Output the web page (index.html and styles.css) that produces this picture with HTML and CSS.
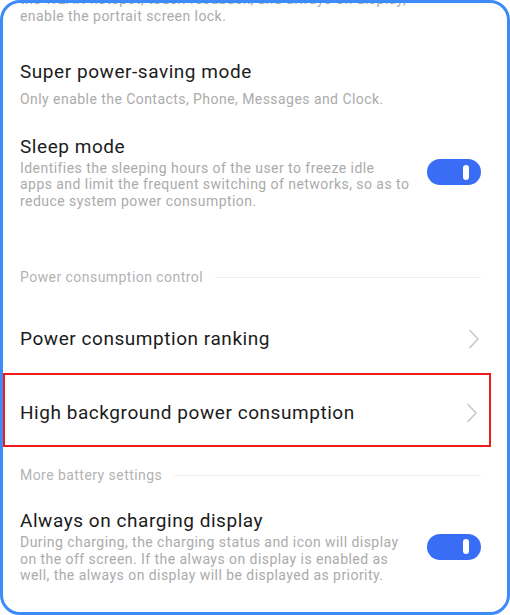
FILE: index.html
```html
<!DOCTYPE html>
<html>
<head>
<meta charset="utf-8">
<link rel="stylesheet" href="styles.css">
</head>
<body>
<div class="frame">
  <div class="list">
    <div class="item item-top">
      <div class="desc">the WLAN hotspot, touch feedback, and always-on display,<br>enable the portrait screen lock.</div>
    </div>

    <div class="item item-super">
      <div class="title">Super power-saving mode</div>
      <div class="desc desc-gap">Only enable the Contacts, Phone, Messages and Clock.</div>
    </div>

    <div class="item item-row item-sleep">
      <div class="text">
        <div class="title">Sleep mode</div>
        <div class="desc desc-tight">Identifies the sleeping hours of the user to freeze idle<br>apps and limit the frequent switching of networks, so as to<br>reduce system power consumption.</div>
      </div>
      <div class="toggle"><span class="knob"></span></div>
    </div>

    <div class="section section-1">
      <span class="section-label">Power consumption control</span>
      <span class="section-line"></span>
    </div>

    <div class="item item-row item-link item-rank">
      <div class="title">Power consumption ranking</div>
      <svg class="chev" width="10" height="20" viewBox="0 0 10 20"><path d="M1 1.5 L9 10 L1 18.5" fill="none" stroke="#c6c6c6" stroke-width="1.5" stroke-linecap="round" stroke-linejoin="round"/></svg>
    </div>

    <div class="item item-row item-link item-high">
      <div class="title">High background power consumption</div>
      <svg class="chev" width="10" height="20" viewBox="0 0 10 20"><path d="M1 1.5 L9 10 L1 18.5" fill="none" stroke="#c6c6c6" stroke-width="1.5" stroke-linecap="round" stroke-linejoin="round"/></svg>
    </div>

    <div class="section section-2">
      <span class="section-label">More battery settings</span>
      <span class="section-line"></span>
    </div>

    <div class="item item-row item-aod">
      <div class="text">
        <div class="title">Always on charging display</div>
        <div class="desc desc-tight">During charging, the charging status and icon will display<br>on the off screen. If the always on display is enabled as<br>well, the always on display will be displayed as priority.</div>
      </div>
      <div class="toggle"><span class="knob"></span></div>
    </div>

    <div class="item item-next">
      <div class="title">Power saving</div>
    </div>
  </div>
</div>
</body>
</html>
```

FILE: styles.css
```css
html, body {
  margin: 0;
  padding: 0;
  background: #ffffff;
}

.frame {
  width: 510px;
  height: 615px;
  box-sizing: border-box;
  border: 3px solid #3d8bf6;
  border-radius: 20px;
  overflow: hidden;
  background: #ffffff;
  font-family: Roboto, "Noto Sans", Arial, sans-serif;
}

.list {
  display: flex;
  flex-direction: column;
  padding: 0 26px 0 17px;
}

.title {
  font-size: 19px;
  line-height: 24px;
  color: #1b1b1b;
  letter-spacing: 0.55px;
  white-space: nowrap;
}

.desc {
  font-size: 14px;
  line-height: 16.5px;
  color: #ababab;
  letter-spacing: 0.45px;
  white-space: nowrap;
}

.item-top {
  margin-top: -11.75px;
}

.item-super {
  margin-top: 36px;
}

.desc-gap {
  margin-top: 7px;
}

.desc-tight {
  margin-top: 1px;
}

.item-row {
  display: flex;
  align-items: center;
  justify-content: space-between;
}

.item-sleep {
  margin-top: 27px;
}

.toggle {
  width: 54px;
  height: 26px;
  border-radius: 13px;
  background: #3a6df5;
  display: flex;
  align-items: center;
  justify-content: flex-end;
  padding-right: 12px;
  box-sizing: border-box;
  flex-shrink: 0;
}

.knob {
  width: 6px;
  height: 15px;
  border-radius: 3px;
  background: #ffffff;
}

.section {
  display: flex;
  align-items: center;
  gap: 12px;
}

.section-1 {
  margin-top: 58px;
}

.section-label {
  font-size: 14px;
  line-height: 20px;
  color: #b3b3b3;
  letter-spacing: 0.45px;
  white-space: nowrap;
}

.section-line {
  flex: 1;
  height: 1px;
  background: #f0f0f0;
}

.item-link .chev {
  margin-right: 2px;
  flex-shrink: 0;
}

.item-rank {
  margin-top: 40px;
  height: 24px;
}

.item-high {
  margin-top: 22px;
  margin-left: -17px;
  margin-right: -10px;
  height: 74px;
  flex-shrink: 0;
  box-sizing: border-box;
  border: 2px solid #f01c1c;
  padding: 5px 10px 0 15px;
}

.section-2 {
  margin-top: 18px;
}

.item-aod {
  margin-top: 24px;
}

.item-next {
  margin-top: 30px;
}
```
